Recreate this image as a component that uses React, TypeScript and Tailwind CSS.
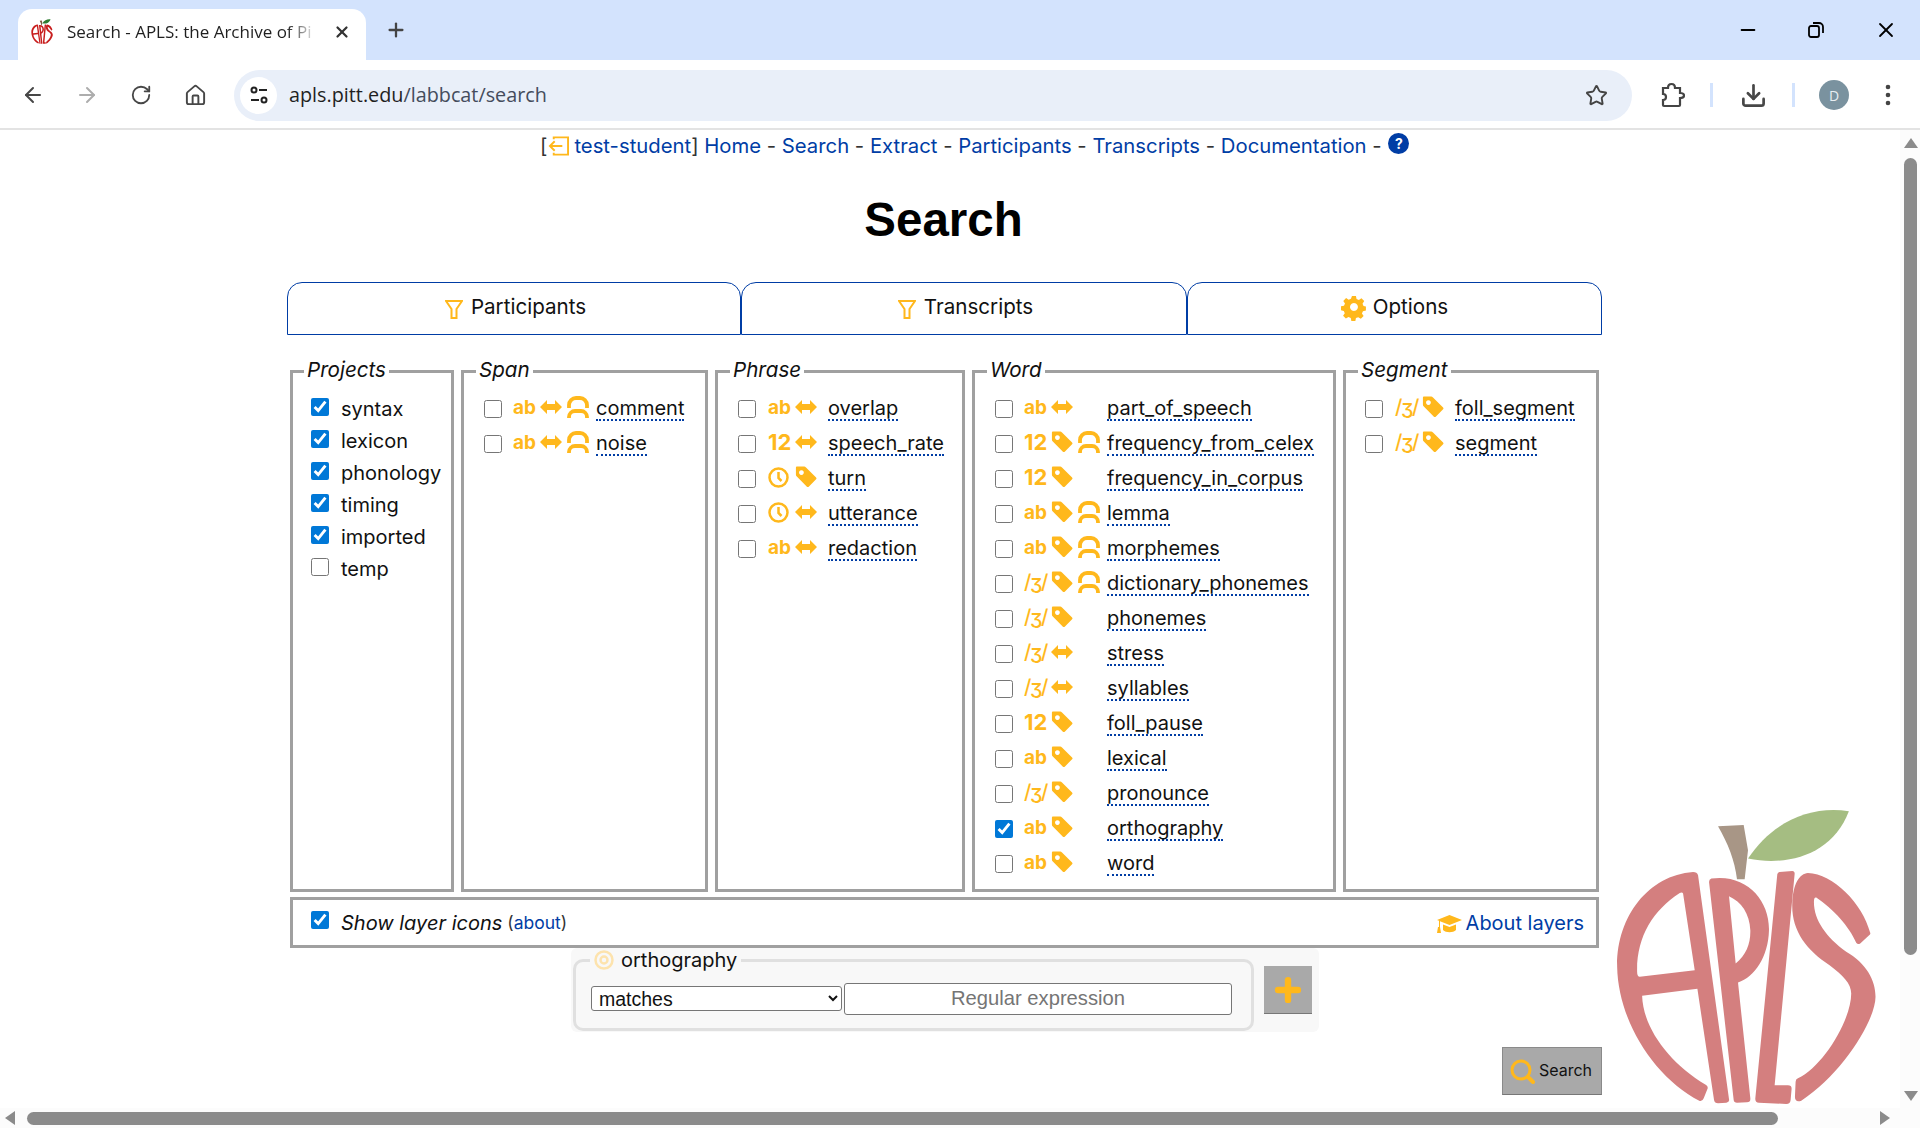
import React from 'react';
import { ArrowLeft, ArrowRight, RotateCw, Home, Star, Download, Minus, X, Plus } from 'lucide-react';

const ORANGE = '#ffb81c';

// layer icons
const Tag = () => (
  <svg width="22" height="22" viewBox="0 0 24 23" className="shrink-0">
    <path
      fill={ORANGE}
      fillRule="evenodd"
      d="M2 0h8q1 0 2 1l11 11q1 1 0 2l-8 8q-1 1-2 0L2 11q-1-1-1-2V1q0-1 1-1ZM7 4a2.6 2.6 0 1 0 .01 0Z"
    />
  </svg>
);

const Arrows = () => (
  <svg width="22" height="14" viewBox="0 0 22 14" className="shrink-0">
    <path fill={ORANGE} d="M0 7l7-7v4h8V0l7 7-7 7v-4H7v4z" />
  </svg>
);

const SpanArc = () => (
  <svg width="22" height="22" viewBox="0 0 22 22" fill="none" stroke={ORANGE} strokeWidth="3.800" className="shrink-0">
    <path d="M2 12V9a7 7 0 0 1 7-7h4a7 7 0 0 1 7 7v3" />
    <path d="M2 22v-1a6 6 0 0 1 6-6h6a6 6 0 0 1 6 6v1" />
  </svg>
);

const Clock = () => (
  <svg width="21" height="21" viewBox="0 0 21 21" fill="none" stroke={ORANGE} strokeWidth="2.500" className="shrink-0">
    <circle cx="10.500" cy="10.500" r="9" />
    <path d="M10.500 5v6l3 3" />
  </svg>
);

const TypeIcon = ({ kind }: { kind: string }) => {
  if (kind === 'ab') return <span className="text-[19px] leading-none font-bold text-[#ffb81c]">ab</span>;
  if (kind === '12') return <span className="text-[22px] leading-none font-bold text-[#ffb81c]">12</span>;
  if (kind === 'ph') return <span className="text-[20px] leading-none tracking-[-1.5px] font-medium text-[#ffb81c]">/ʒ/</span>;
  return <Clock />;
};

const Funnel = () => (
  <svg width="18" height="19" viewBox="0 0 18 19" fill="none" stroke={ORANGE} strokeWidth="2" className="mt-[4px]">
    <path d="M1 1h16l-5.500 8v9h-5V9z" />
  </svg>
);

const Gear = () => (
  <svg width="26" height="26" viewBox="0 0 24 24" className="mt-[1px]">
    <path
      fill={ORANGE}
      fillRule="evenodd"
      d="M10 1h4l.6 3 2.300 1 2.600-1.700 2.800 2.800L20.600 8.700l1 2.300 2.400.6v4l-3 .6-1 2.300 1.700 2.600-2.800 2.800-2.600-1.700-2.300 1-.6 2.800h-4l-.6-3-2.300-1-2.600 1.700-2.800-2.800 1.700-2.600-1-2.300-2.800-.6v-4l3-.6 1-2.300-1.700-2.600 2.800-2.800 2.600 1.700 2.300-1zM12 8a4 4 0 1 0 .01 0Z"
      transform="scale(.92) translate(1 0)"
    />
  </svg>
);

const GradCap = () => (
  <svg width="25" height="19" viewBox="0 0 25 19" className="shrink-0 ml-auto mt-[4px]">
    <path fill={ORANGE} d="M12.500 0 25 5l-12.500 5L3 6.200V12H2V5.800L0 5z" />
    <path fill={ORANGE} d="M6 9.500l6.500 2.600L19 9.500V15c-3 3-10 3-13 0zM1 12h2l1 6H0z" />
  </svg>
);

// site logo, coordinates taken off the big picture
const AplsLogo = ({ className, red = '#d47f7f', leaf = '#a5bd82', stem = '#a89686' }: { className: string; red?: string; leaf?: string; stem?: string }) => (
  <svg viewBox="640 80 795 895" className={className}>
    <path fill={leaf} d="M1348 93C1240 75 1120 120 1045 235C1170 260 1300 220 1348 93Z" />
    <path fill={stem} d="M955 138L1032 134L1045 210L1035 297L1012 297C1005 240 985 190 955 138Z" />
    <path
      fill={red}
      fillRule="evenodd"
      d="M880 275C745 285 650 410 652 560C655 720 760 890 900 963Q908 965 912 955L924 925Q925 918 918 914C810 850 730 745 727 647L893 626L943 960Q945 970 955 970L980 968Q990 966 988 958L895 285Q892 275 880 275ZM850 340Q848 335 840 338C760 390 710 470 712 575Q712 590 720 590L885 570Z"
    />
    <path
      fill={red}
      fillRule="evenodd"
      d="M935 295C1040 280 1110 360 1108 450C1106 530 1065 590 1015 607L1052 955Q1053 966 1042 967L1012 968Q1003 968 1002 960L928 305Q928 297 935 295ZM988 348L1008 550C1040 525 1053 490 1052 450C1050 400 1025 365 988 348Z"
    />
    <path
      fill={red}
      d="M1140 275L1178 272Q1186 272 1185 282L1125 916L1165 916Q1176 916 1176 926L1173 960Q1172 972 1160 972L1078 968Q1066 967 1067 955L1133 282Q1134 276 1140 275Z"
    />
    <path
      fill={red}
      d="M1412 458Q1414 462 1408 466L1382 490Q1375 494 1370 488C1350 440 1300 385 1250 352Q1243 350 1243 365C1243 420 1280 470 1340 515C1400 550 1428 600 1428 650C1428 720 1330 880 1205 962Q1186 968 1186 950L1188 905Q1188 897 1195 895C1270 860 1355 720 1355 640C1355 610 1330 585 1290 555C1220 510 1175 450 1178 370C1180 310 1200 280 1225 278C1300 280 1390 370 1412 458Z"
    />
  </svg>
);

const Check = ({ checked = false, className = '' }: { checked?: boolean; className?: string }) => (
  <input type="checkbox" defaultChecked={checked} className={`w-[18px] h-[18px] m-0 shrink-0 accent-[#0078d7] ${className}`} />
);

type Layer = { name: string; type: string; scope: 'tag' | 'arrows'; span?: boolean; checked?: boolean };

const LayerRow = ({ layer, wide }: { layer: Layer; wide: boolean }) => (
  <div className="h-[35px] flex items-center">
    <Check checked={layer.checked} />
    <div className={`${wide ? 'ml-[11px]' : 'ml-[12px]'} w-[27px] -mt-[3px] flex items-center whitespace-nowrap`}>
      <TypeIcon kind={layer.type} />
    </div>
    <div className="w-[27px] -mt-[3px] flex items-center">{layer.scope === 'tag' ? <Tag /> : <Arrows />}</div>
    <div className={`${wide ? 'w-[29px]' : 'w-[6px]'} -mt-[3px] flex items-center`}>{layer.span && <SpanArc />}</div>
    <span className="leading-[22px] border-b-2 border-dotted border-[#003da5] whitespace-nowrap">{layer.name}</span>
  </div>
);

const Legend = ({ children, className }: { children: React.ReactNode; className: string }) => (
  <legend className={`${className} px-[3px] italic text-[20.600px] leading-[24px]`}>
    <span className="block -translate-y-[1px]">{children}</span>
  </legend>
);

const LayerSet = ({ title, width, layers, wide, pl }: { title: string; width: string; layers: Layer[]; wide: boolean; pl: string }) => (
  <fieldset className={`${width} min-w-0 border-[3px] border-[#a0a0a0]`}>
    <Legend className="ml-[12px]">{title}</Legend>
    <div className={`${pl} pt-[8px]`}>
      {layers.map((l) => (
        <LayerRow key={l.name} layer={l} wide={wide} />
      ))}
    </div>
  </fieldset>
);

const projects = [
  { name: 'syntax', checked: true },
  { name: 'lexicon', checked: true },
  { name: 'phonology', checked: true },
  { name: 'timing', checked: true },
  { name: 'imported', checked: true },
  { name: 'temp', checked: false },
];

const span: Layer[] = [
  { name: 'comment', type: 'ab', scope: 'arrows', span: true },
  { name: 'noise', type: 'ab', scope: 'arrows', span: true },
];

const phrase: Layer[] = [
  { name: 'overlap', type: 'ab', scope: 'arrows' },
  { name: 'speech_rate', type: '12', scope: 'arrows' },
  { name: 'turn', type: 'clock', scope: 'tag' },
  { name: 'utterance', type: 'clock', scope: 'arrows' },
  { name: 'redaction', type: 'ab', scope: 'arrows' },
];

const word: Layer[] = [
  { name: 'part_of_speech', type: 'ab', scope: 'arrows' },
  { name: 'frequency_from_celex', type: '12', scope: 'tag', span: true },
  { name: 'frequency_in_corpus', type: '12', scope: 'tag' },
  { name: 'lemma', type: 'ab', scope: 'tag', span: true },
  { name: 'morphemes', type: 'ab', scope: 'tag', span: true },
  { name: 'dictionary_phonemes', type: 'ph', scope: 'tag', span: true },
  { name: 'phonemes', type: 'ph', scope: 'tag' },
  { name: 'stress', type: 'ph', scope: 'arrows' },
  { name: 'syllables', type: 'ph', scope: 'arrows' },
  { name: 'foll_pause', type: '12', scope: 'tag' },
  { name: 'lexical', type: 'ab', scope: 'tag' },
  { name: 'pronounce', type: 'ph', scope: 'tag' },
  { name: 'orthography', type: 'ab', scope: 'tag', checked: true },
  { name: 'word', type: 'ab', scope: 'tag' },
];

const segment: Layer[] = [
  { name: 'foll_segment', type: 'ph', scope: 'tag' },
  { name: 'segment', type: 'ph', scope: 'tag' },
];

const navLinks = ['Home', 'Search', 'Extract', 'Participants', 'Transcripts', 'Documentation'];

const BrowserChrome = () => (
  <div className="shrink-0 font-['Open_Sans',sans-serif]">
    {/* tab strip */}
    <div className="h-[60px] bg-[#d3e3fd] flex items-end pl-[18px]">
      <div className="w-[348px] h-[51px] bg-white rounded-t-[14px] flex items-center pl-[13px] pr-[14px] pb-[6px]">
        <AplsLogo className="w-[22px] h-[25px] shrink-0" red="#c81e1e" leaf="#2e7d32" stem="#7a5c3e" />
        <span className="ml-[14px] w-[250px] text-[17px] text-[#1f1f1f] whitespace-nowrap [mask-image:linear-gradient(to_right,black_88%,transparent)]">
          Search - APLS: the Archive of Pi
        </span>
        <X size={18} strokeWidth={3} className="ml-[16px] text-[#333]" />
      </div>
      <Plus size={22} strokeWidth={2.5} className="ml-[19px] mb-[19px] text-[#444]" />
      <div className="ml-auto mb-[18px] flex items-center text-black">
        <Minus size={22} strokeWidth={2} className="mr-[49px]" />
        <svg width="16" height="16" viewBox="0 0 16 16" fill="none" stroke="currentColor" strokeWidth="1.800" className="mr-[50px]">
          <rect x="1" y="4" width="10" height="11" rx="2" />
          <path d="M5 1h6a4 4 0 0 1 4 4v6" />
        </svg>
        <X size={24} strokeWidth={1.8} className="mr-[22px]" />
      </div>
    </div>
    {/* toolbar */}
    <div className="h-[70px] bg-white border-b-2 border-[#e3e3e3] flex items-center text-[#474747] pt-[2px]">
      <ArrowLeft size={24} strokeWidth={2} className="ml-[21px]" />
      <ArrowRight size={24} strokeWidth={2} className="ml-[30px] text-[#adadad]" />
      <RotateCw size={22} strokeWidth={2} className="ml-[31px]" />
      <Home size={23} strokeWidth={2} className="ml-[32px]" />
      <div className="ml-[27px] w-[1398px] h-[51px] rounded-full bg-[#e9eff9] flex items-center pl-[6px]">
        <div className="w-[37px] h-[37px] rounded-full bg-white flex items-center justify-center">
          <svg width="20" height="20" viewBox="0 0 20 20" fill="none" stroke="#222" strokeWidth="2">
            <circle cx="5" cy="5" r="2.500" />
            <path d="M10 5h8M2 15h8" />
            <circle cx="15" cy="15" r="2.500" />
          </svg>
        </div>
        <span className="ml-[12px] text-[19.800px] text-[#1f1f1f]">
          apls.pitt.edu<span className="text-[#444c5c]">/labbcat/search</span>
        </span>
        <Star size={23} strokeWidth={2} className="ml-auto mr-[24px] text-[#444]" />
      </div>
      <svg width="26" height="26" viewBox="0 0 26 26" fill="none" stroke="#444" strokeWidth="2.200" className="ml-[27px]">
        <path d="M4 6h5q0-4 3.500-4T16 6h5v5q4 0 4 2.500T21 16v7a1 1 0 0 1-1 1H5a1 1 0 0 1-1-1v-5q3 0 3-3t-3-3z" />
      </svg>
      <div className="ml-[25px] w-[3px] h-[24px] bg-[#d3e3fd]" />
      <Download size={27} strokeWidth={2.4} className="ml-[27px]" />
      <div className="ml-[25px] w-[3px] h-[24px] bg-[#d3e3fd]" />
      <div className="ml-[24px] w-[30px] h-[30px] rounded-full bg-[#7a929f] text-[#e8eef2] text-[14px] flex items-center justify-center">D</div>
      <svg width="6" height="22" viewBox="0 0 6 22" fill="#444" className="ml-[36px]">
        <circle cx="3" cy="3" r="2.300" />
        <circle cx="3" cy="11" r="2.300" />
        <circle cx="3" cy="19" r="2.300" />
      </svg>
    </div>
  </div>
);

const App: React.FC = () => {
  return (
    <div className="relative w-[1920px] h-[1128px] overflow-hidden bg-white flex flex-col font-['Inter',sans-serif] text-[20px] text-[#111]">
      <BrowserChrome />

      <div className="flex-1 min-h-0 flex">
        <div className="flex-1 min-w-0 pl-[287px]">
          {/* top nav */}
          <div className="h-[32px] -ml-[287px] pl-[540px] flex items-center whitespace-nowrap text-[20.300px] text-[#333]">
            <span>[</span>
            <svg width="21" height="20" viewBox="0 0 22 20" fill="none" stroke={ORANGE} strokeWidth="2" className="ml-[1px] mr-[5px]">
              <path d="M6 3V1h15v18H6v-2" />
              <path d="M15 10H2m5-5-5 5 5 5" />
            </svg>
            <a className="text-[#003da5]">test-student</a>
            <span>]&nbsp;</span>
            {navLinks.map((l) => (
              <React.Fragment key={l}>
                <a className="text-[#003da5]">{l}</a>
                <span>&nbsp;-&nbsp;</span>
              </React.Fragment>
            ))}
            <span className="ml-[1px] -mt-[6px] w-[21px] h-[21px] rounded-full bg-[#003da5] text-white text-[14px] font-bold flex items-center justify-center">?</span>
          </div>

          <h1 className="mt-[32px] w-[1313px] h-[52px] text-center font-['Liberation_Sans',sans-serif] text-[47.500px] leading-[52px] font-bold text-black">Search</h1>

          {/* tabs */}
          <div className="mt-[36px] h-[53px] flex text-[20.600px]">
            <div className="w-[454px] border-[1.5px] border-[#003da5] rounded-t-[15px] flex items-center justify-center gap-[8px] pb-[2px] pl-[3px]">
              <Funnel />
              Participants
            </div>
            <div className="w-[446px] border-[1.5px] border-[#003da5] rounded-t-[15px] flex items-center justify-center gap-[8px] pb-[2px] pl-[3px]">
              <Funnel />
              Transcripts
            </div>
            <div className="w-[415px] border-[1.5px] border-[#003da5] rounded-t-[15px] flex items-center justify-center gap-[6px] pb-[2px]">
              <Gear />
              Options
            </div>
          </div>

          {/* layer picker */}
          <div className="mt-[24px] ml-[3px] h-[533px] flex gap-[7px]">
            <fieldset className="w-[164px] min-w-0 border-[3px] border-[#a0a0a0]">
              <Legend className="ml-[11px]">Projects</Legend>
              <div className="pl-[18px] pt-[10px]">
                {projects.map((p) => (
                  <label key={p.name} className="h-[32px] flex items-center">
                    <Check checked={p.checked} className="-mt-[5px]" />
                    <span className="ml-[12px]">{p.name}</span>
                  </label>
                ))}
              </div>
            </fieldset>
            <LayerSet title="Span" width="w-[247px]" pl="pl-[20px]" layers={span} wide />
            <LayerSet title="Phrase" width="w-[250px]" pl="pl-[20px]" layers={phrase} wide={false} />
            <LayerSet title="Word" width="w-[364px]" pl="pl-[20px]" layers={word} wide />
            <LayerSet title="Segment" width="w-[256px]" pl="pl-[19px]" layers={segment} wide={false} />
          </div>

          {/* show icons */}
          <div className="mt-[5px] ml-[3px] w-[1309px] h-[51px] border-[3px] border-[#a0a0a0] flex items-center pl-[18px] pr-[12px]">
            <Check checked className="-mt-[6px]" />
            <span className="ml-[12px] italic">Show layer icons</span>
            <span className="ml-[5px] mt-[2px] text-[17.500px] text-[#333]">
              (<a className="text-[#003da5]">about</a>)
            </span>
            <GradCap />
            <a className="ml-[4px] text-[#003da5]">About layers</a>
          </div>

          {/* pattern matcher */}
          <div className="ml-[284px] w-[748px] h-[84px] bg-[#f8f8f8] rounded-[6px] flex pl-[2px]">
            <fieldset className="w-[681px] h-[83px] min-w-0 border-[3px] border-[#e0e0e0] rounded-[10px] flex items-center">
              <legend className="ml-[14px] px-[4px] flex items-center leading-[24px]">
                <svg width="20" height="20" viewBox="0 0 20 20" fill="none" stroke="#fde3ad" strokeWidth="2.500" className="mr-[7px]">
                  <circle cx="10" cy="10" r="8.500" />
                  <circle cx="10" cy="10" r="3.500" />
                </svg>
                orthography
              </legend>
              <div className="flex items-center pl-[15px] pb-[3px] font-['Liberation_Sans',sans-serif]">
                <select className="w-[251px] h-[25px] bg-white border border-[#767676] rounded-[3px] text-[19.500px] leading-none pl-[3px] outline-none" defaultValue="matches">
                  <option>matches</option>
                </select>
                <input
                  placeholder="Regular expression"
                  className="ml-[2px] w-[388px] h-[32px] bg-white border border-[#767676] rounded-[3px] text-[20.200px] text-center placeholder:text-[#757575]"
                />
              </div>
            </fieldset>
            <div className="ml-[10px] mt-[18px] w-[48px] h-[48px] bg-[#a9a9a9] border-b-[1.5px] border-[#777] flex items-center justify-center">
              <Plus size={34} strokeWidth={4.5} color={ORANGE} />
            </div>
          </div>

          <div className="mt-[15px] ml-[1215px] w-[100px] h-[48px] bg-[#a9a9a9] border border-[#8a8a8a] border-b-[#777] flex items-center justify-center gap-[4px] text-[16px] pr-[2px] pb-[2px]">
            <svg width="25" height="25" viewBox="0 0 25 25" fill="none" stroke={ORANGE} strokeWidth="3" className="mt-[2px]">
              <circle cx="11" cy="11" r="9" />
              <path d="M18 18l5 5" strokeWidth="4" strokeLinecap="round" />
            </svg>
            Search
          </div>
        </div>

        {/* vertical scrollbar */}
        <div className="w-[20px] shrink-0 bg-[#fcfcfc] flex flex-col items-center pl-[1px]">
          <div className="mt-[8px] w-0 h-0 border-x-[7px] border-x-transparent border-b-[10px] border-b-[#8b8b8b]" />
          <div className="mt-[10px] w-[13px] h-[797px] rounded-full bg-[#8b8b8b]" />
          <div className="mt-auto mb-[7px] w-0 h-0 border-x-[7px] border-x-transparent border-t-[10px] border-t-[#8b8b8b]" />
        </div>
      </div>

      {/* horizontal scrollbar */}
      <div className="h-[20px] shrink-0 bg-[#fcfcfc] flex items-center pl-[5px]">
        <div className="w-0 h-0 border-y-[7px] border-y-transparent border-r-[10px] border-r-[#8b8b8b]" />
        <div className="ml-[12px] w-[1751px] h-[13px] rounded-full bg-[#8b8b8b]" />
        <div className="ml-[102px] w-0 h-0 border-y-[7px] border-y-transparent border-l-[10px] border-l-[#8b8b8b]" />
      </div>

      {/* logo sits over the page corner */}
      <AplsLogo className="absolute left-[1613px] top-[807px] w-[265px] h-[298px]" />
    </div>
  );
};

export default App;
